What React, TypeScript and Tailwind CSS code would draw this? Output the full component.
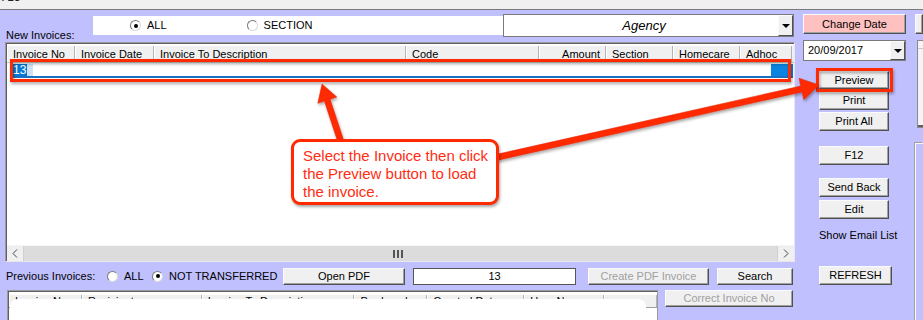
import React from "react";

const winBtn =
  "flex items-center justify-center bg-[#f0f0f0] border border-[#fbfbfb] border-r-[#505050] border-b-[#505050] shadow-[inset_-1px_-1px_0_#a0a0a0] leading-none whitespace-nowrap";

const headCell =
  "h-full flex items-center pl-[6px] bg-[#f0f0f0] border-r border-[#b4b4b4] shadow-[inset_1px_0_0_#ffffff] whitespace-nowrap overflow-hidden";

function Radio({ checked, label, className = "" }: { checked?: boolean; label: string; className?: string }) {
  return (
    <div className={`flex items-center gap-[6px] whitespace-nowrap ${className}`}>
      <span className="w-[11px] h-[11px] shrink-0 rounded-full bg-white border border-[#7a7a7a] border-b-[#d8d8d8] border-r-[#d8d8d8] flex items-center justify-center">
        {checked && <span className="w-[4px] h-[4px] rounded-full bg-black" />}
      </span>
      <span className="text-[11px] leading-none">{label}</span>
    </div>
  );
}

function DropArrow() {
  return (
    <div className="w-[15px] h-full flex items-center justify-center bg-[#f0f0f0] border border-[#fbfbfb] border-r-[#505050] border-b-[#505050]">
      <span className="w-0 h-0 border-x-[4px] border-x-transparent border-t-[4px] border-t-black" />
    </div>
  );
}

function arrowPoints(x1: number, y1: number, x2: number, y2: number, w: number, hl: number, hw: number) {
  const dx = x2 - x1;
  const dy = y2 - y1;
  const len = Math.hypot(dx, dy);
  const ux = dx / len;
  const uy = dy / len;
  const px = -uy;
  const py = ux;
  const bx = x2 - ux * hl;
  const by = y2 - uy * hl;
  const pts = [
    [x1 + (px * w) / 2, y1 + (py * w) / 2],
    [bx + (px * w) / 2, by + (py * w) / 2],
    [bx + (px * hw) / 2, by + (py * hw) / 2],
    [x2, y2],
    [bx - (px * hw) / 2, by - (py * hw) / 2],
    [bx - (px * w) / 2, by - (py * w) / 2],
    [x1 - (px * w) / 2, y1 - (py * w) / 2],
  ];
  return pts.map((p) => `${p[0].toFixed(1)},${p[1].toFixed(1)}`).join(" ");
}

const topCols = [
  { label: "Invoice No", w: "w-[68px]" },
  { label: "Invoice Date", w: "w-[79px]" },
  { label: "Invoice To Description", w: "w-[252px]" },
  { label: "Code", w: "w-[133px]" },
  { label: "Amount", w: "w-[67px]", right: true },
  { label: "Section", w: "w-[67px]" },
  { label: "Homecare", w: "w-[67px]" },
  { label: "Adhoc", w: "w-[52px]" },
];

const bottomCols = [
  { label: "Invoice No", w: "w-[73px]" },
  { label: "Recipient", w: "w-[120px]" },
  { label: "Invoice To Description", w: "w-[153px]" },
  { label: "Produced", w: "w-[73px]" },
  { label: "Created Date", w: "w-[97px]" },
  { label: "User Name", w: "w-[80px]" },
  { label: "", w: "w-[53px]" },
];

export default function App() {
  const red = "#ff2a00";
  return (
    <div className="relative w-[923px] h-[320px] overflow-hidden bg-[#c0c0ff] text-[11px] text-black font-['Liberation_Sans',Arial,sans-serif]">
      {/* title strip */}
      <div className="h-[10px] bg-[#f0f0f0] border-b border-[#7a7a7a] overflow-hidden">
        <div className="-mt-[9px] ml-[-2px] text-[12px] leading-[12px] text-[#222]">x 13</div>
      </div>

      <div className="flex">
        {/* main column */}
        <div className="ml-[5px] w-[790px] flex flex-col">
          {/* new invoices row */}
          <div className="h-[32px] flex items-start">
            <div className="w-[88px] pl-[1px] mt-[19px] leading-[13px]">New Invoices:</div>
            <div className="mt-[6px] h-[19px] w-[410px] bg-white flex items-center">
              <Radio checked label="ALL" className="ml-[37px]" />
              <Radio label="SECTION" className="ml-[80px]" />
            </div>
            <div className="mt-[4px] h-[23px] w-[291px] bg-white border border-[#7a7a7a] flex">
              <div className="flex-1 flex items-center justify-center italic text-[13px] pl-[6px]">Agency</div>
              <DropArrow />
            </div>
          </div>

          {/* invoices list */}
          <div className="h-[220px] border border-[#9a9a9a] border-r-[#e8e8e8] border-b-[#e8e8e8] shadow-[inset_1px_1px_0_#606060] bg-white flex flex-col pl-[1px] pt-[1px]">
            <div className="h-[19px] flex border-b border-[#d0d0d0] pt-[2px]">
              {topCols.map((c) => (
                <div key={c.label} className={`${headCell} ${c.w} ${c.right ? "justify-end pr-[5px]" : ""}`}>
                  {c.label}
                </div>
              ))}
              <div className="flex-1 bg-[#f0f0f0]" />
            </div>
            <div className="h-[14px] mt-[1px] ml-[5px] mr-[1px] flex items-stretch border-b-[2px] border-[#1a6fc0]">
              <span className="bg-[#0078d7] text-white text-[12px] leading-[12px] px-[1px]">13</span>
              <span className="w-[6px] bg-[#cfe2f5]" />
              <div className="flex-1" />
              <span className="w-[22px] bg-[#0a84e0]" />
            </div>
            <div className="flex-1" />
            {/* horizontal scrollbar */}
            <div className="h-[16px] flex bg-[#dcdcdc] border-t border-[#f4f4f4]">
              <div className="w-[17px] bg-[#f0f0f0] flex items-center justify-center border-r border-[#d0d0d0]">
                <svg width="6" height="9" viewBox="0 0 6 9">
                  <polyline points="5,0.5 1,4.5 5,8.5" fill="none" stroke="#444" strokeWidth="1" />
                </svg>
              </div>
              <div className="flex-1 flex items-center justify-center">
                <div className="flex gap-[2px] ml-[-6px]">
                  <span className="w-[2px] h-[8px] bg-[#555]" />
                  <span className="w-[2px] h-[8px] bg-[#555]" />
                  <span className="w-[2px] h-[8px] bg-[#555]" />
                </div>
              </div>
              <div className="w-[17px] bg-[#f0f0f0] flex items-center justify-center border-l border-[#d0d0d0]">
                <svg width="6" height="9" viewBox="0 0 6 9">
                  <polyline points="1,0.5 5,4.5 1,8.5" fill="none" stroke="#444" strokeWidth="1" />
                </svg>
              </div>
            </div>
          </div>

          {/* previous invoices row */}
          <div className="mt-[5px] h-[18px] flex items-center">
            <div className="ml-[1px] w-[101px] leading-none whitespace-nowrap">Previous Invoices:</div>
            <Radio label="ALL" className="w-[45px]" />
            <Radio checked label="NOT TRANSFERRED" className="w-[131px]" />
            <div className={`${winBtn} w-[122px] h-[17px]`}>Open PDF</div>
            <div className="ml-[8px] w-[163px] h-[17px] bg-white border border-[#555] flex items-center justify-center">13</div>
            <div className={`${winBtn} ml-[12px] w-[121px] h-[17px] text-[#a0a0a0]`}>Create PDF Invoice</div>
            <div className={`${winBtn} ml-[8px] w-[76px] h-[17px]`}>Search</div>
          </div>

          {/* previous invoices list */}
          <div className="mt-[5px] flex items-start">
            <div className="relative ml-[2px] w-[651px] h-[40px] bg-white border border-[#9a9a9a] shadow-[inset_1px_1px_0_#606060] pl-[1px] pt-[1px] overflow-hidden">
              <div className="h-[16px] flex border-b border-[#a0a0a0] pt-[3px]">
                {bottomCols.map((c, i) => (
                  <div key={i} className={`${headCell} ${c.w}`}>
                    {c.label}
                  </div>
                ))}
              </div>
              <div className="absolute left-[2px] top-[8px] w-[636px] h-[40px] bg-white rounded-[8px]" />
            </div>
            <div className={`${winBtn} ml-[7px] w-[128px] h-[17px] text-[#a0a0a0]`}>Correct Invoice No</div>
          </div>
        </div>

        {/* button column */}
        <div className="ml-[8px] w-[103px] flex flex-col">
          <div className={`${winBtn} mt-[4px] h-[20px] bg-[#ffc0c0]`}>Change Date</div>
          <div className="mt-[6px] h-[21px] bg-white border border-[#7a7a7a] flex">
            <div className="flex-1 flex items-center pl-[4px]">20/09/2017</div>
            <DropArrow />
          </div>
          <div className="ml-[16px] w-[70px] flex flex-col">
            <div className={`${winBtn} mt-[10px] h-[18px]`}>Preview</div>
            <div className={`${winBtn} mt-[2px] h-[19px]`}>Print</div>
            <div className={`${winBtn} mt-[2px] h-[19px]`}>Print All</div>
            <div className={`${winBtn} mt-[15px] h-[19px]`}>F12</div>
            <div className={`${winBtn} mt-[13px] h-[19px]`}>Send Back</div>
            <div className={`${winBtn} mt-[3px] h-[19px]`}>Edit</div>
            <div className="mt-[10px] leading-[13px] whitespace-nowrap">Show Email List</div>
            <div className={`${winBtn} mt-[24px] w-[73px] h-[19px]`}>REFRESH</div>
          </div>
        </div>

        {/* far right sliver */}
        <div className="ml-[9px] flex-1 flex flex-col">
          <div className={`${winBtn} mt-[4px] h-[20px] bg-[#c0ffc0]`} />
          <div className="mt-[6px] ml-[2px] h-[88px] bg-[#f4f4f4] border border-[#8a8a8a] border-r-0 shadow-[inset_0_-2px_0_#606060]">
            <div className="h-[8px] border-b border-[#c8c8c8]" />
          </div>
          <div className="mt-[15px] h-[200px] border-l border-t border-[#f8f8f8] shadow-[-1px_-1px_0_#a0a0a0]" />
        </div>
      </div>

      {/* annotation overlay */}
      <svg className="absolute left-0 top-0 pointer-events-none" width="923" height="320" viewBox="0 0 923 320">
        <defs>
          <filter id="sh" x="-10%" y="-50%" width="120%" height="200%">
            <feDropShadow dx="1" dy="2" stdDeviation="1.5" floodColor="#000" floodOpacity="0.35" />
          </filter>
        </defs>
        <rect x="11.5" y="60.5" width="778" height="20" fill="none" stroke={red} strokeWidth="3" filter="url(#sh)" />
        <rect x="817.5" y="69.5" width="74" height="21" fill="none" stroke={red} strokeWidth="3" filter="url(#sh)" />
        <polygon points={arrowPoints(342, 145, 322, 84, 6, 17, 20)} fill={red} stroke="#e02000" strokeWidth="0.5" filter="url(#sh)" />
        <polygon points={arrowPoints(494, 158, 819, 85, 6, 18, 22)} fill={red} stroke="#e02000" strokeWidth="0.5" filter="url(#sh)" />
      </svg>
      <div className="absolute left-[291px] top-[139px] w-[208px] h-[66px] bg-white border-[3px] border-[#ff2a00] rounded-[9px] shadow-[1px_2px_3px_rgba(0,0,0,0.35)] pl-[9px] pt-[5px] text-[15px] leading-[18px] text-[#ff2d12] font-['Liberation_Sans',Helvetica,Arial,sans-serif]">
        Select the Invoice then click
        <br />
        the Preview button to load
        <br />
        the invoice.
      </div>
    </div>
  );
}
